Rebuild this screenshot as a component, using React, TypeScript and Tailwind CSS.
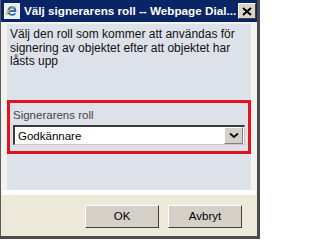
import React from "react";

function IEIcon() {
  return (
    <svg width="16" height="16" viewBox="0 0 16 16">
      <rect x="0" y="0" width="16" height="16" fill="#e8eef8" />
      <path d="M8 3.2c-2.7 0-4.6 2-4.6 4.8s1.9 4.8 4.6 4.8c2 0 3.5-1 4.1-2.6H9.8c-.4.6-1 .9-1.8.9-1.3 0-2.1-.9-2.2-2.2h6.6C12.6 5.3 10.7 3.2 8 3.2zm-2.1 3.8c.2-1.1 1-1.8 2.1-1.8s1.9.7 2 1.8H5.9z" fill="#1e6fd0" />
      <path d="M1.5 11.5c1-3.5 6-8 12.5-9.5-5 2.5-9 6-11 10z" fill="#f0b020" />
    </svg>
  );
}

export default function App() {
  return (
    <div className="w-[260px] h-[239px] flex flex-col bg-[#f3f2ee] border-l border-r-[3px] border-b-[3px] border-l-[#5a5a5a] border-r-[#4a4a4a] border-b-[#4a4a4a] overflow-hidden" style={{ fontFamily: '"Liberation Sans", Arial, sans-serif' }}>
      <div className="h-[22px] shrink-0 bg-[#0a2566] flex items-center pl-[2px] pr-[2px] -ml-px -mr-[3px] overflow-hidden">
        <div className="w-[16px] h-[16px] ml-[2px] shrink-0"><IEIcon /></div>
        <div className="ml-[4px] min-w-0 text-white font-bold text-[11.7px] whitespace-nowrap leading-none">
          Välj signerarens roll -- Webpage Dial...
        </div>
        <div className="ml-auto mr-[2px] shrink-0 w-[18px] h-[16px] bg-[#d8d4cc] border border-t-white border-l-white border-r-[#404040] border-b-[#404040] flex items-center justify-center">
          <svg width="10" height="9" viewBox="0 0 10 9">
            <path d="M1 1l8 7M9 1L1 8" stroke="#000" strokeWidth="2" />
          </svg>
        </div>
      </div>
      <div className="flex-1 flex flex-col pt-[2px]">
        <div className="mx-[6px] h-[166px] bg-[#dde2ea] px-[3px] pt-[4px]">
          <p className="text-[12px] leading-[13.5px] text-[#111]">
            Välj den roll som kommer att användas för signering av objektet efter att objektet har låsts upp
          </p>
          <div className="mt-[31px] -mx-[3px] h-[54px] border-[3px] border-[#e0141c] px-[3px] pt-[6px]">
            <div className="text-[11.5px] leading-[13px] text-[#444]">Signerarens roll</div>
            <div className="mt-[3px] h-[20px] flex bg-white border-t-2 border-l-2 border-t-[#3a3a3a] border-l-[#3a3a3a] border-r border-b border-r-[#e9b8b8] border-b-[#e9b8b8]">
              <div className="flex-1 text-[11.5px] leading-[18px] pl-[3px] text-black">Godkännare</div>
              <div className="w-[19px] h-[17px] mr-[1px] bg-[#d4d0c8] border border-t-white border-l-white border-r-[#808080] border-b-[#808080] flex items-center justify-center">
                <svg width="10" height="7" viewBox="0 0 10 7">
                  <path d="M1 1.5l4 3.5 4-3.5" stroke="#111" strokeWidth="2" fill="none" />
                </svg>
              </div>
            </div>
          </div>
        </div>
        <div className="h-[5px] bg-white mx-px" />
        <div className="flex-1 bg-[#ece9d8] flex justify-end items-start pt-[10px] pr-[15px] gap-[9px]">
          <button className="w-[74px] h-[23px] bg-[#d4d0c8] border border-t-white border-l-white border-r-[#404040] border-b-[#404040] text-[11.5px] text-black">OK</button>
          <button className="w-[74px] h-[23px] bg-[#d4d0c8] border border-t-white border-l-white border-r-[#404040] border-b-[#404040] text-[11.5px] text-black">Avbryt</button>
        </div>
      </div>
    </div>
  );
}
